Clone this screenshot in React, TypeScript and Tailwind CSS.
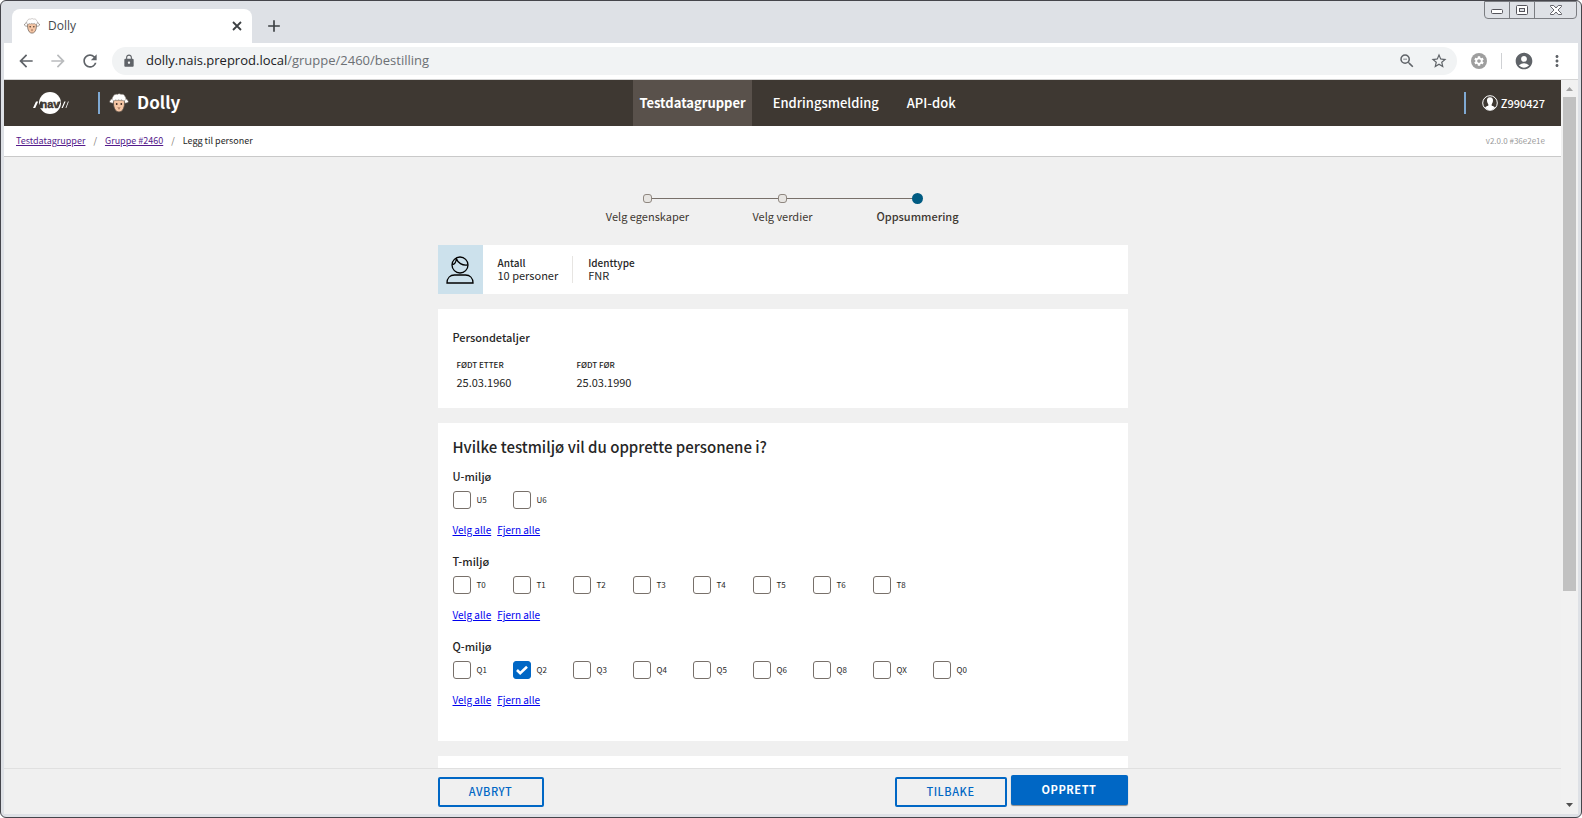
import { useState } from "react";
import type { ReactNode } from "react";
import { MdAccountCircle, MdArrowBack, MdArrowForward, MdClose, MdAdd, MdLock, MdMoreVert, MdRefresh, MdStarBorder, MdZoomOut, MdSettings } from "react-icons/md";

function Sheep({ className }: { className: string }) {
  return (
    <svg viewBox="0 0 20 20" className={className} aria-hidden="true">
      <path d="M5.500 5.800C3 5 1.200 6.500.4 8.800c1.200 1.700 4 1.900 5.800.6zM14.500 5.800c2.500-.8 4.300.7 5.100 3-1.200 1.700-4 1.900-5.800.6z" fill="#fff" stroke="#5a5049" strokeWidth=".7" />
      <path d="M4.800 7h10.400c.7 4 .2 7.700-1.700 10.200-1.700 2.300-5.300 2.300-7 0C4.600 14.700 4.100 11 4.800 7z" fill="#f5c6a5" stroke="#5a5049" strokeWidth=".8" />
      <path d="M4 7.600C2.800 6.300 3.200 4.300 4.300 3.300 4.600 1.700 7 .9 8.400 1.400c1-.8 2.700-.8 3.600 0 1.700-.5 3.600.3 3.800 1.900 1.300.9 1.400 3 .2 4.300-1.200.4-2.600.1-3.200-.9-1.200.9-2.200.8-3 0-1 .9-2.500.8-3.200.1-.5.9-1.600 1.200-2.600.8z" fill="#fff" stroke="#8a827b" strokeWidth=".5" />
      <circle cx="7.700" cy="11" r=".9" fill="#3b2a20" />
      <circle cx="12.300" cy="11" r=".9" fill="#3b2a20" />
      <path d="M8.700 14.500l1.300.7 1.300-.7M10 15.200v1.200" fill="none" stroke="#8a5a44" strokeWidth=".8" />
    </svg>
  );
}

function NavLogo() {
  return (
    <svg viewBox="0 0 36 22" className="h-[22px] w-9" role="img" aria-label="nav">
      <circle cx="17" cy="11" r="11" fill="#fff" />
      <path d="M0 16h2.200l3-6.500H3zM28.500 16h1.300l2.800-6.500h-1.300zM32.500 16h.8l2.500-6.500H35z" fill="#fff" />
      <text x="17" y="15.500" textAnchor="middle" fontFamily="Liberation Sans, sans-serif" fontWeight="bold" fontSize="11" fill="#3e3832" stroke="#3e3832" strokeWidth=".4">nav</text>
      <path d="M5 16l2.500-6.500H9V16zM25 16l2.800-6.500H26L24 16z" fill="#3e3832" />
    </svg>
  );
}

function PersonIcon() {
  return (
    <svg viewBox="0 0 28 28" className="size-7" fill="none" stroke="#000" strokeWidth="1.300" aria-hidden="true">
      <circle cx="14" cy="9" r="8" />
      <path d="M6.200 8.500c2.300 0 4.200-2.300 4-6.200 1.500 4.500 6 7.500 11.600 6.600" />
      <path d="M1 27c0-5 3.200-8 7.500-8h11c4.300 0 7.500 3 7.500 8z" />
    </svg>
  );
}

function WindowControls() {
  return (
    <div className="absolute top-0 right-1 flex h-[18px] rounded-b border border-[#7b7d82] bg-[#dee1e6]">
      <button aria-label="Minimize" className="flex w-[25px] items-center justify-center border-r border-[#7b7d82]">
        <svg viewBox="0 0 12 12" className="size-3"><rect x=".5" y="5.500" width="11" height="4" rx="1" fill="#fff" stroke="#55555c" /></svg>
      </button>
      <button aria-label="Maximize" className="flex w-[25px] items-center justify-center border-r border-[#7b7d82]">
        <svg viewBox="0 0 12 10" className="h-2.5 w-3"><rect x=".5" y=".5" width="11" height="9" rx="1" fill="#fff" stroke="#55555c" /><rect x="3.500" y="3.500" width="5" height="3" fill="#dee1e6" stroke="#55555c" /></svg>
      </button>
      <button aria-label="Close window" className="flex w-[41px] items-center justify-center">
        <svg viewBox="0 0 12 10" className="h-2.5 w-3"><path d="M.5.5h3.200L6 3 8.300.5h3.200v1L8 5l3.500 3.500v1H8.300L6 7 3.700 9.500H.5v-1L4 5 .5 1.500z" fill="#fff" stroke="#55555c" strokeWidth=".9" /></svg>
      </button>
    </div>
  );
}

function BrowserChrome() {
  return (
    <div className="shrink-0 font-['Open_Sans',sans-serif]">
      <div className="flex h-[42px] items-end">
        <div className="ml-2 flex h-[34px] w-60 items-center rounded-t-lg bg-white pr-2 pl-3">
          <Sheep className="size-4" />
          <span className="ml-2 flex-1 text-xs text-[#45494d]">Dolly</span>
          <button aria-label="Close tab">
            <svg viewBox="0 0 14 14" className="size-3.5" aria-hidden="true"><path d="M3 3l8 8M11 3l-8 8" stroke="#3c4043" strokeWidth="1.800" /></svg>
          </button>
        </div>
        <button aria-label="New tab" className="mb-[7px] ml-3"><MdAdd className="size-5 text-[#3c4043]" /></button>
      </div>
      <div className="flex h-[37px] items-center border-b border-[#d5d5d5] bg-white pr-3">
        <button aria-label="Back" className="ml-3"><MdArrowBack className="size-5 text-[#5f6368]" /></button>
        <button aria-label="Forward" className="ml-3"><MdArrowForward className="size-5 text-[#babcbe]" /></button>
        <button aria-label="Reload" className="ml-3"><MdRefresh className="size-5 text-[#5f6368]" /></button>
        <div className="ml-3 flex h-7 flex-1 items-center rounded-full bg-[#f1f3f4] pr-[9px] pl-2.5">
          <MdLock className="size-3.5 text-[#5f6368]" />
          <p className="ml-2.5 flex-1 text-[13px] text-[#202124]">dolly.nais.preprod.local<span className="text-[#6c7074]">/gruppe/2460/bestilling</span></p>
          <button aria-label="Zoom"><MdZoomOut className="size-[18px] text-[#5f6368]" /></button>
          <button aria-label="Bookmark" className="ml-3.5"><MdStarBorder className="size-[18px] text-[#5f6368]" /></button>
        </div>
        <button aria-label="Extension" className="ml-3.5 flex size-4 items-center justify-center rounded-full bg-[#9e9e9e]"><MdSettings className="size-3 text-white" /></button>
        <span className="ml-3.5 h-4 w-px bg-[#cfd1d4]" />
        <button aria-label="Profile" className="ml-3"><MdAccountCircle className="size-5 text-[#5f6368]" /></button>
        <button aria-label="Menu" className="ml-3.5"><MdMoreVert className="size-[18px] text-[#5f6368]" /></button>
      </div>
    </div>
  );
}

function AppHeader() {
  return (
    <header className="grid h-[46px] shrink-0 grid-cols-[1fr_auto_1fr] items-center bg-[#3e3832] text-white">
      <div className="flex items-center pl-[29px]">
        <NavLogo />
        <span className="ml-[29px] h-[22px] w-0.5 bg-[#7fa9d3]" />
        <Sheep className="ml-[9px] size-5" />
        <span className="ml-2 pb-0.5 text-[17px] leading-6 font-bold">Dolly</span>
      </div>
      <nav className="flex h-full items-center pl-6 text-[13px] leading-5">
        <a href="#grupper" className="flex h-full items-center bg-[#59514b] px-1.5 font-bold">Testdatagrupper</a>
        <a href="#endring" className="ml-[21px] font-medium">Endringsmelding</a>
        <a href="#api" className="ml-7 font-medium">API-dok</a>
      </nav>
      <div className="flex items-center justify-end pr-4">
        <span className="h-[22px] w-0.5 bg-[#7fa9d3]" />
        <svg viewBox="0 0 16 16" className="ml-4 size-4" aria-hidden="true">
          <circle cx="8" cy="8" r="7.300" fill="none" stroke="#fff" />
          <path d="M8 2.200c2.200 0 3.200 1.500 3 3.600-.1 1.500-.7 2.700-1.300 3.400v1.600c1.500.5 2.800.9 3.300 1.600C11.800 14 10 15 8 15s-3.800-1-5-2.600c.5-.7 1.800-1.100 3.300-1.600V9.200C5.700 8.500 5.100 7.300 5 5.800c-.2-2.100.8-3.600 3-3.600z" fill="#fff" />
        </svg>
        <span className="ml-[3px] text-[11px] leading-5 font-medium">Z990427</span>
      </div>
    </header>
  );
}

function Breadcrumbs() {
  return (
    <div className="flex h-[31px] shrink-0 items-center justify-between border-b border-[#c9c9c9] bg-white pr-4 pl-3 text-[9px] leading-4">
      <nav className="flex gap-2 text-[#262626]">
        <a href="#grupper" className="text-[#551a8b] underline">Testdatagrupper</a>
        <span className="text-[#78706a]">/</span>
        <a href="#gruppe" className="text-[#551a8b] underline">Gruppe #2460</a>
        <span className="text-[#78706a]">/</span>
        <span>Legg til personer</span>
      </nav>
      <span className="text-[8px] text-[#999]">v2.0.0 #36e2e1e</span>
    </div>
  );
}

function Stepper() {
  const steps = ["Velg egenskaper", "Velg verdier", "Oppsummering"];
  return (
    <ol className="mx-auto flex w-[405px] pt-[35px]">
      {steps.map((step, i) => (
        <li key={step} className="flex-1 text-center text-[11px] text-[#3e3832]">
          <div className="flex h-3 items-center">
            <span className={i === 0 ? "h-px flex-1" : "h-px flex-1 bg-[#78706a]"} />
            <span className={i === 2 ? "size-[11px] rounded-full bg-[#005b82]" : "size-[9px] rounded-[3px] border border-[#8f8780] bg-[#e7e5e2]"} />
            <span className={i === 2 ? "h-px flex-1" : "h-px flex-1 bg-[#78706a]"} />
          </div>
          <p className={i === 2 ? "mt-0.5 leading-5 font-medium" : "mt-0.5 leading-5"}>{step}</p>
        </li>
      ))}
    </ol>
  );
}

function TextLink({ onClick, children }: { onClick: () => void; children: ReactNode }) {
  return (
    <a href="#miljo" onClick={(e) => { e.preventDefault(); onClick(); }} className="text-[#0000ee] underline">{children}</a>
  );
}

function EnvironmentGroup({ name, options, initial = [] }: { name: string; options: string[]; initial?: string[] }) {
  const [selected, setSelected] = useState<string[]>(initial);
  const toggle = (id: string) => setSelected(selected.includes(id) ? selected.filter((s) => s !== id) : [...selected, id]);
  return (
    <fieldset className="mb-[15px] h-[70px]">
      <legend className="text-[11px] leading-4 font-medium">{name}</legend>
      <div className="mt-[7px] flex">
        {options.map((id) => (
          <label key={id} className="flex w-[60px] items-center gap-1.5 text-[8px] leading-4">
            <span className="grid size-[18px]">
              <input type="checkbox" checked={selected.includes(id)} onChange={() => toggle(id)} className="peer col-start-1 row-start-1 appearance-none rounded-[3px] border border-[#78706a] bg-white checked:border-[#0067c5] checked:bg-[#0067c5]" />
              <svg viewBox="0 0 18 18" className="pointer-events-none invisible col-start-1 row-start-1 peer-checked:visible" aria-hidden="true">
                <path d="M4 9l3.200 3.200L14 5.800" fill="none" stroke="#fff" strokeWidth="2.600" />
              </svg>
            </span>
            {id}
          </label>
        ))}
      </div>
      <div className="mt-[13px] flex gap-1.5 text-[10px] leading-4">
        <TextLink onClick={() => setSelected(options)}>Velg alle</TextLink>
        <TextLink onClick={() => setSelected([])}>Fjern alle</TextLink>
      </div>
    </fieldset>
  );
}

function Scrollbar() {
  return (
    <div className="flex w-[17px] shrink-0 flex-col bg-[#f1f1f1] px-0.5" aria-hidden="true">
      <svg viewBox="0 0 13 17" className="h-[17px]"><path d="M3 11h7L6.500 7z" fill="#a3a3a3" /></svg>
      <div className="flex-[12] bg-[#c1c1c1]" />
      <div className="flex-[5]" />
      <svg viewBox="0 0 13 17" className="h-[17px]"><path d="M3 6h7l-3.500 4z" fill="#505050" /></svg>
    </div>
  );
}

export default function App() {
  return (
    <div className="relative flex h-screen flex-col overflow-hidden rounded-md border border-[#45454b] bg-[#dee1e6] px-[3px] pb-[3px]">
      <WindowControls />
      <BrowserChrome />
      <div className="flex min-h-0 flex-1 bg-[#f0f0f0] font-['Noto_Sans_CJK_SC','Noto_Sans',sans-serif] text-[#262626]">
        <div className="flex min-w-0 flex-1 flex-col">
          <AppHeader />
          <Breadcrumbs />
          <main className="min-h-0 flex-1 overflow-hidden">
            <Stepper />
            <div className="mx-auto mt-[19px] flex w-[690px] flex-col gap-[15px]">
              <section className="flex bg-white text-[11px] leading-[13px]">
                <div className="flex h-[49px] w-[45px] items-center justify-center bg-[#cce1ec]"><PersonIcon /></div>
                <dl className="my-[11px] border-r border-[#e7e5e2] pr-3.5 pl-[15px]">
                  <dt className="text-[10px] font-medium">Antall</dt>
                  <dd>10 personer</dd>
                </dl>
                <dl className="my-[11px] pl-[15px]">
                  <dt className="text-[10px] font-medium">Identtype</dt>
                  <dd>FNR</dd>
                </dl>
              </section>
              <section className="h-[99px] bg-white px-[15px] pt-[18px]">
                <h2 className="text-[11px] leading-5 font-medium">Persondetaljer</h2>
                <div className="mt-2.5 grid grid-cols-[120px_120px] px-1">
                  <dl>
                    <dt className="text-[8px] leading-4 font-medium">FØDT ETTER</dt>
                    <dd className="text-[11px] leading-[19px]">25.03.1960</dd>
                  </dl>
                  <dl>
                    <dt className="text-[8px] leading-4 font-medium">FØDT FØR</dt>
                    <dd className="text-[11px] leading-[19px]">25.03.1990</dd>
                  </dl>
                </div>
              </section>
              <section className="bg-white px-[15px] pt-3 pb-1.5">
                <h2 className="text-[15px] leading-6 font-medium">Hvilke testmiljø vil du opprette personene i?</h2>
                <div className="mt-[9px] pb-3">
                  <EnvironmentGroup name="U-miljø" options={["U5", "U6"]} />
                  <EnvironmentGroup name="T-miljø" options={["T0", "T1", "T2", "T3", "T4", "T5", "T6", "T8"]} />
                  <EnvironmentGroup name="Q-miljø" options={["Q1", "Q2", "Q3", "Q4", "Q5", "Q6", "Q8", "QX", "Q0"]} initial={["Q2"]} />
                </div>
              </section>
              <section className="h-20 bg-white" />
            </div>
          </main>
          <footer className="shrink-0 border-t border-[#e0e0e0] bg-[#f0f0f0]">
            <div className="mx-auto flex h-[45px] w-[690px] items-center gap-1 pb-1 text-[11px] font-medium tracking-wider">
              <button className="mt-1 h-[30px] w-[106px] rounded-xs border-2 border-[#0067c5] text-[#0067c5]">AVBRYT</button>
              <span className="flex-1" />
              <button className="mt-1 h-[30px] w-28 rounded-xs border-2 border-[#0067c5] text-[#0067c5]">TILBAKE</button>
              <button className="h-[30px] w-[117px] rounded-xs bg-[#0067c5] font-bold text-white shadow-[0_1px_1px_#888]">OPPRETT</button>
            </div>
          </footer>
        </div>
        <Scrollbar />
      </div>
    </div>
  );
}
